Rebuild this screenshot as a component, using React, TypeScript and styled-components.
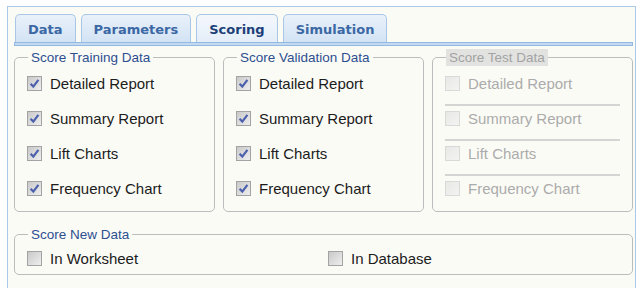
import styled, { createGlobalStyle } from "styled-components";

const GlobalStyle = createGlobalStyle`
  body {
    margin: 0;
    background: #ffffff;
    font-family: "Liberation Sans", Arial, sans-serif;
  }
`;

const Panel = styled.div`
  box-sizing: border-box;
  margin: 6px 0 0 7px;
  width: 629px;
  height: 282px;
  border: 1px solid #a9c8ea;
  border-bottom: none;
  background: #fbfbf6;
  padding: 7px 2px 0 6px;
`;

const TabStrip = styled.div`
  display: flex;
  gap: 5px;
  padding-left: 1px;
`;

const Tab = styled.div<{ $active?: boolean }>`
  box-sizing: border-box;
  height: 28px;
  display: flex;
  align-items: center;
  padding: 1px 12px 0;
  border: 1px solid #a9c6e6;
  border-bottom: none;
  border-radius: 5px 5px 0 0;
  font-family: "DejaVu Sans", Verdana, sans-serif;
  font-weight: bold;
  font-size: 13px;
  color: ${({ $active }) => ($active ? "#1d3f78" : "#3b68a4")};
  background: ${({ $active }) =>
    $active
      ? "linear-gradient(#f4f8fc, #e4eef9)"
      : "linear-gradient(#e9f1fa, #d3e3f4)"};
`;

const Band = styled.div`
  box-sizing: border-box;
  height: 4px;
  border: 1px solid #95bae2;
  background: #c3d9f1;
`;

const Groups = styled.div`
  display: grid;
  grid-template-columns: repeat(3, 1fr);
  gap: 8px;
  margin-top: 3px;
`;

const Group = styled.fieldset`
  margin: 0;
  padding: 0 0 5px;
  min-width: 0;
  border: 1px solid #bcbcbc;
  border-radius: 5px;
`;

const NewDataGroup = styled(Group)`
  margin-top: 14px;
  padding-bottom: 0;
`;

const Legend = styled.legend<{ $disabled?: boolean }>`
  margin-left: 13px;
  padding: 0 3px;
  font-size: 13.5px;
  line-height: 17px;
  color: ${({ $disabled }) => ($disabled ? "#a3a3a3" : "#2d4f90")};
  background: ${({ $disabled }) => ($disabled ? "#e2e2e0" : "transparent")};
`;

const Row = styled.label<{ $disabled?: boolean; $rule?: boolean }>`
  box-sizing: border-box;
  display: flex;
  align-items: center;
  gap: 8px;
  height: 35px;
  padding-left: 12px;
  font-size: 15px;
  color: ${({ $disabled }) => ($disabled ? "#ababab" : "#1c1c1c")};
  background-image: ${({ $rule }) =>
    $rule ? "linear-gradient(#d4d4d2, #d4d4d2)" : "none"};
  background-size: calc(100% - 24px) 2px;
  background-position: 12px 3px;
  background-repeat: no-repeat;
`;

const NewDataRow = styled.div`
  display: grid;
  grid-template-columns: 301px 1fr;
  height: 31px;
  & > label {
    height: 31px;
  }
`;

const Box = styled.span<{ $disabled?: boolean }>`
  box-sizing: border-box;
  flex: none;
  width: 15px;
  height: 15px;
  display: flex;
  align-items: center;
  justify-content: center;
  border: 1px solid ${({ $disabled }) => ($disabled ? "#d9d9d7" : "#a3a3a3")};
  background: ${({ $disabled }) =>
    $disabled
      ? "linear-gradient(135deg, #e8e8e6, #f3f3f1)"
      : "linear-gradient(135deg, #c9c9c9, #eeeeee)"};
`;

type CheckProps = {
  label: string;
  checked?: boolean;
  disabled?: boolean;
  rule?: boolean;
};

const Check = ({ label, checked, disabled, rule }: CheckProps) => (
  <Row $disabled={disabled} $rule={rule}>
    <Box $disabled={disabled}>
      {checked && (
        <svg width="11" height="11" viewBox="0 0 11 11">
          <path
            d="M1.6 5.8 L4.3 8.6 L9.4 1.8"
            fill="none"
            stroke="#4c60ad"
            strokeWidth="2.2"
          />
        </svg>
      )}
    </Box>
    {label}
  </Row>
);

const items = ["Detailed Report", "Summary Report", "Lift Charts", "Frequency Chart"];

const App = () => (
  <>
    <GlobalStyle />
    <Panel>
      <TabStrip>
        <Tab>Data</Tab>
        <Tab>Parameters</Tab>
        <Tab $active>Scoring</Tab>
        <Tab>Simulation</Tab>
      </TabStrip>
      <Band />
      <Groups>
        <Group>
          <Legend>Score Training Data</Legend>
          {items.map((item) => (
            <Check key={item} label={item} checked />
          ))}
        </Group>
        <Group>
          <Legend>Score Validation Data</Legend>
          {items.map((item) => (
            <Check key={item} label={item} checked />
          ))}
        </Group>
        <Group>
          <Legend $disabled>Score Test Data</Legend>
          {items.map((item, i) => (
            <Check key={item} label={item} disabled rule={i > 0} />
          ))}
        </Group>
      </Groups>
      <NewDataGroup>
        <Legend>Score New Data</Legend>
        <NewDataRow>
          <Check label="In Worksheet" />
          <Check label="In Database" />
        </NewDataRow>
      </NewDataGroup>
    </Panel>
  </>
);

export default App;
